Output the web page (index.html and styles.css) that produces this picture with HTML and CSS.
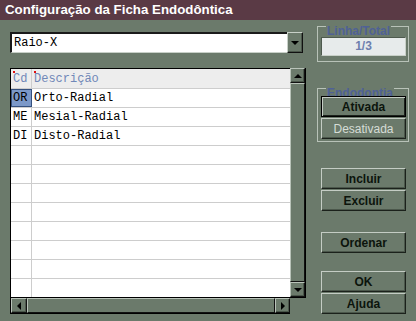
FILE: index.html
```html
<!DOCTYPE html>
<html lang="pt-BR">
<head>
    <meta charset="UTF-8">
    <title>Configuração da Ficha Endodôntica</title>
    <link rel="stylesheet" href="styles.css">
</head>
<body>
<div class="window">
    <div class="titlebar">Configuração da Ficha Endodôntica</div>
    <div class="content">
        <div class="left">
            <div class="combo">
                <div class="combo-field">Raio-X</div>
                <div class="btn-arrow"><span class="tri tri-down"></span></div>
            </div>

            <div class="grid-wrap">
                <div class="table">
                    <div class="row head">
                        <div class="cell cd mark">Cd</div>
                        <div class="cell desc mark">Descrição</div>
                    </div>
                    <div class="row">
                        <div class="cell cd selected">OR</div>
                        <div class="cell desc">Orto-Radial</div>
                    </div>
                    <div class="row">
                        <div class="cell cd">ME</div>
                        <div class="cell desc">Mesial-Radial</div>
                    </div>
                    <div class="row">
                        <div class="cell cd">DI</div>
                        <div class="cell desc">Disto-Radial</div>
                    </div>
                    <div class="row"><div class="cell cd"></div><div class="cell desc"></div></div>
                    <div class="row"><div class="cell cd"></div><div class="cell desc"></div></div>
                    <div class="row"><div class="cell cd"></div><div class="cell desc"></div></div>
                    <div class="row"><div class="cell cd"></div><div class="cell desc"></div></div>
                    <div class="row"><div class="cell cd"></div><div class="cell desc"></div></div>
                    <div class="row"><div class="cell cd"></div><div class="cell desc"></div></div>
                    <div class="row"><div class="cell cd"></div><div class="cell desc"></div></div>
                    <div class="row"><div class="cell cd"></div><div class="cell desc"></div></div>
                </div>
                <div class="vscroll">
                    <div class="btn-arrow"><span class="tri tri-up"></span></div>
                    <div class="thumb"></div>
                    <div class="btn-arrow"><span class="tri tri-down"></span></div>
                </div>
                <div class="hscroll">
                    <div class="btn-arrow"><span class="tri tri-left"></span></div>
                    <div class="thumb"></div>
                    <div class="btn-arrow"><span class="tri tri-right"></span></div>
                </div>
                <div class="corner"></div>
            </div>
        </div>

        <div class="right">
            <div class="group group-linha">
                <div class="group-title">Linha/Total</div>
                <div class="counter">1/3</div>
            </div>

            <div class="group group-endo">
                <div class="group-title">Endodontia</div>
                <button class="btn btn-default">Ativada</button>
                <button class="btn btn-light">Desativada</button>
            </div>

            <div class="stack stack-edit">
                <button class="btn">Incluir</button>
                <button class="btn">Excluir</button>
            </div>
            <div class="stack stack-sort">
                <button class="btn">Ordenar</button>
            </div>
            <div class="stack stack-ok">
                <button class="btn">OK</button>
                <button class="btn">Ajuda</button>
            </div>
        </div>
    </div>
</div>
</body>
</html>
```

FILE: styles.css
```css
body {
    margin: 0;
    background-color: #6b7a6b;
    font-family: "Liberation Sans", Arial, sans-serif;
}
.window {
    width: 416px;
    height: 321px;
    background-color: #6b7a6b;
    overflow: hidden;
}
.titlebar {
    height: 20px;
    line-height: 20px;
    padding-left: 5px;
    background-color: #5a3a45;
    color: #ffffff;
    font-size: 13.3px;
    font-weight: bold;
}
.content {
    display: flex;
    padding-left: 10px;
}
.left {
    width: 296px;
}
.right {
    width: 92px;
    margin-left: 11px;
}

/* combo */
.combo {
    display: flex;
    width: 293px;
    height: 21px;
    margin-top: 12px;
}
.combo-field {
    flex: 1;
    background-color: #ffffff;
    border-top: 2px solid #1a1a1a;
    border-left: 2px solid #1a1a1a;
    border-bottom: 1px solid #c8d0c8;
    font-family: "Liberation Mono", "Courier New", monospace;
    font-size: 12px;
    line-height: 18px;
    padding-left: 2px;
    color: #000000;
}
.combo .btn-arrow {
    width: 16px;
    border-color: #c8d0c8 #111111 #111111 #c8d0c8;
}

/* arrow buttons */
.btn-arrow {
    box-sizing: border-box;
    display: flex;
    align-items: center;
    justify-content: center;
    background-color: #6b7a6b;
    border: 1px solid;
    border-color: #b9c3b9 #111111 #111111 #b9c3b9;
    box-shadow: inset -1px -1px #4b574b;
}
.tri {
    width: 0;
    height: 0;
}
.tri-down {
    border-left: 4px solid transparent;
    border-right: 4px solid transparent;
    border-top: 4px solid #000000;
}
.tri-up {
    border-left: 4px solid transparent;
    border-right: 4px solid transparent;
    border-bottom: 4px solid #000000;
}
.tri-left {
    border-top: 4px solid transparent;
    border-bottom: 4px solid transparent;
    border-right: 4px solid #000000;
}
.tri-right {
    border-top: 4px solid transparent;
    border-bottom: 4px solid transparent;
    border-left: 4px solid #000000;
}

/* grid */
.grid-wrap {
    display: grid;
    grid-template-columns: 280px 16px;
    grid-template-rows: 230px 16px;
    margin-top: 15px;
}
.table {
    background-color: #ffffff;
    border: 1px solid #000000;
    border-right: none;
    overflow: hidden;
    font-family: "Liberation Mono", "Courier New", monospace;
    font-size: 12px;
}
.row {
    display: flex;
    height: 18px;
    border-bottom: 1px solid #cdcdcd;
}
.row.head {
    height: 19px;
    background-color: #ededed;
    color: #7088b8;
}
.cell {
    line-height: 18px;
    padding-left: 2px;
    box-sizing: border-box;
}
.head .cell {
    line-height: 21px;
}
.cd {
    width: 21px;
    border-right: 1px solid #cdcdcd;
}
.desc {
    flex: 1;
}
.mark {
    position: relative;
}
.mark::before {
    content: "";
    position: absolute;
    left: 2px;
    top: 2px;
    width: 2px;
    height: 2px;
    background-color: #e01010;
}
.selected {
    background-color: #7b98c8;
    border: 1px solid #34507e;
    line-height: 16px;
    padding-left: 1px;
}

.vscroll {
    display: grid;
    grid-template-rows: 15px 1fr 15px;
    border-right: 1px solid #000000;
    border-bottom: 1px solid #000000;
}
.hscroll {
    display: grid;
    grid-template-columns: 16px 1fr 15px;
    border-bottom: 1px solid #000000;
    border-left: 1px solid #000000;
}
.thumb {
    background-color: #6b7a6b;
    border-left: 1px solid #b9c3b9;
    border-top: 1px solid #b9c3b9;
    border-right: 1px solid #111111;
    border-bottom: 1px solid #111111;
}
.corner {
    background-color: #6b7a6b;
}

/* right side */
.group {
    display: flex;
    flex-direction: column;
    padding: 0 2px 2px 3px;
    border: 1px solid #b8c2b8;
}
.group-title {
    align-self: flex-start;
    margin: -2px 0 0 5px;
    padding: 0 1px;
    background-color: #6b7a6b;
    font-size: 12px;
    font-weight: bold;
    line-height: 12px;
    color: #4f6196;
}
.group-linha {
    margin-top: 6px;
    padding-bottom: 5px;
}
.counter {
    height: 19px;
    box-sizing: border-box;
    background-color: #e7ebeb;
    border-top: 1px solid #4e5a4e;
    border-left: 1px solid #4e5a4e;
    border-right: 1px solid #c8d0c8;
    border-bottom: 1px solid #c8d0c8;
    text-align: center;
    font-size: 12px;
    font-weight: bold;
    line-height: 17px;
    color: #6e7fae;
}
.group-endo {
    margin-top: 26px;
    gap: 1px;
}
.btn {
    display: block;
    width: 85px;
    height: 21px;
    padding: 0;
    background-color: #6b7a6b;
    border: 1px solid;
    border-color: #c4ccc4 #1b211b #1b211b #c4ccc4;
    box-shadow: inset -1px -1px #4b574b;
    font-family: "Liberation Sans", Arial, sans-serif;
    font-size: 12px;
    font-weight: bold;
    color: #0c140c;
}
.btn-default {
    margin-top: -4px;
    border: 1px solid #000000;
    box-shadow: inset 1px 1px #c4ccc4, inset -1px -1px #1b211b;
}
.btn-light {
    font-weight: normal;
    color: #d6ddd6;
}
.stack {
    display: flex;
    flex-direction: column;
    gap: 1px;
    padding-left: 4px;
}
.stack-edit {
    margin-top: 26px;
}
.stack-sort {
    margin-top: 21px;
}
.stack-ok {
    margin-top: 18px;
}
```
